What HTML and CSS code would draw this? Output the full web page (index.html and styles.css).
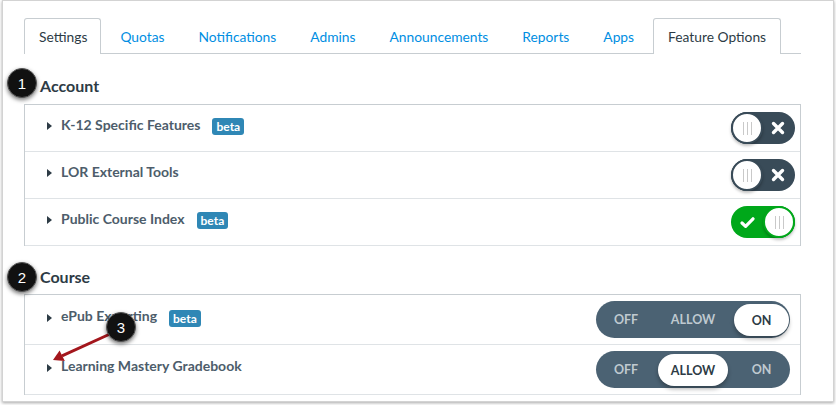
FILE: index.html
```html
<!DOCTYPE html>
<html>
<head>
<meta charset="utf-8">
<link rel="stylesheet" href="styles.css">
</head>
<body>
<div class="frame">
  <div class="tabs">
    <div class="tab active">Settings</div>
    <div class="tab">Quotas</div>
    <div class="tab">Notifications</div>
    <div class="tab">Admins</div>
    <div class="tab">Announcements</div>
    <div class="tab">Reports</div>
    <div class="tab">Apps</div>
    <div class="tab active">Feature Options</div>
  </div>

  <h2 class="section-title">Account</h2>
  <div class="panel">
    <div class="row">
      <span class="caret"></span><span class="name">K-12 Specific Features</span><span class="beta">beta</span>
      <span class="switch off">
        <span class="knob"><i></i><i></i><i></i></span>
        <svg class="mark" width="14" height="14" viewBox="0 0 14 14"><path d="M2.5 2.5 L11.5 11.5 M11.5 2.5 L2.5 11.5" stroke="#fff" stroke-width="3.4" stroke-linecap="round"/></svg>
      </span>
    </div>
    <div class="row">
      <span class="caret"></span><span class="name">LOR External Tools</span>
      <span class="switch off">
        <span class="knob"><i></i><i></i><i></i></span>
        <svg class="mark" width="14" height="14" viewBox="0 0 14 14"><path d="M2.5 2.5 L11.5 11.5 M11.5 2.5 L2.5 11.5" stroke="#fff" stroke-width="3.4" stroke-linecap="round"/></svg>
      </span>
    </div>
    <div class="row">
      <span class="caret"></span><span class="name">Public Course Index</span><span class="beta">beta</span>
      <span class="switch on">
        <svg class="mark" width="15" height="13" viewBox="0 0 15 13"><path d="M2 7 L5.6 10.4 L13 2.8" fill="none" stroke="#fff" stroke-width="3.2" stroke-linecap="round" stroke-linejoin="round"/></svg>
        <span class="knob"><i></i><i></i><i></i></span>
      </span>
    </div>
  </div>

  <h2 class="section-title course">Course</h2>
  <div class="panel">
    <div class="row tall">
      <span class="caret"></span><span class="name">ePub Exporting</span><span class="beta">beta</span>
      <span class="tri">
        <span class="opt o-off">OFF</span>
        <span class="opt o-allow">ALLOW</span>
        <span class="opt o-on sel">ON</span>
      </span>
    </div>
    <div class="row tall">
      <span class="caret"></span><span class="name">Learning Mastery Gradebook</span>
      <span class="tri">
        <span class="opt o-off">OFF</span>
        <span class="opt o-allow sel">ALLOW</span>
        <span class="opt o-on">ON</span>
      </span>
    </div>
  </div>
</div>

<span class="callout c1">1</span>
<span class="callout c2">2</span>
<svg class="arrow" width="836" height="405" viewBox="0 0 836 405">
  <line x1="110" y1="334" x2="62" y2="355.9" stroke="#a3161c" stroke-width="3"/>
  <polygon points="53,360 64.8,361 59.6,350.4" fill="#a3161c"/>
</svg>
<span class="callout c3">3</span>
</body>
</html>
```

FILE: styles.css
```css
html, body {
  margin: 0;
  padding: 0;
  background: #fff;
}
body {
  position: relative;
  width: 836px;
  height: 405px;
  overflow: hidden;
  font-family: Lato, "Noto Sans", "Liberation Sans", sans-serif;
}
.frame {
  margin-left: 2px;
  border: 1px solid #d3d3d3;
  box-shadow: 0 1px 3px rgba(0,0,0,0.35);
  padding: 17px 0 0 21px;
  box-sizing: border-box;
  width: 832px;
  height: 402px;
  background: #fff;
}
.tabs {
  display: flex;
  width: 777px;
  height: 35px;
  border-bottom: 1px solid #c7cdd1;
}
.tab {
  flex-shrink: 0;
  white-space: nowrap;
  height: 35px;
  box-sizing: border-box;
  padding: 0 14px;
  margin-right: 4px;
  display: flex;
  align-items: center;
  font-size: 13.8px;
  color: #008ee2;
  border: 1px solid transparent;
  border-bottom: none;
}
.tab:first-child {
  padding-right: 13px;
}
.tab.active {
  color: #2d3b45;
  border-color: #c7cdd1;
  border-radius: 3px 3px 0 0;
  background: #fff;
  height: 36px;
  margin-bottom: -1px;
}
.section-title {
  margin: 20px 0 6px;
  padding-left: 16px;
  font-size: 16px;
  line-height: 24px;
  font-weight: 700;
  color: #2d3b45;
}
.section-title.course {
  margin: 19px 0 5px;
}
.panel {
  width: 777px;
  box-sizing: border-box;
  border: 1px solid #c7cdd1;
  border-bottom: none;
}
.row {
  height: 47px;
  box-sizing: border-box;
  border-bottom: 1px solid #dfe3e6;
  display: flex;
  align-items: center;
  padding: 0 5px 0 22px;
}
.row.tall {
  height: 50px;
  padding-right: 10px;
}
.caret {
  width: 0;
  height: 0;
  border-top: 4px solid transparent;
  border-bottom: 4px solid transparent;
  border-left: 5px solid #2d3b45;
  margin-right: 9px;
  margin-bottom: 4px;
}
.name {
  font-size: 14px;
  font-weight: 700;
  color: #4d5d6b;
  margin-bottom: 8px;
}
.beta {
  margin-left: 12px;
  margin-bottom: 3px;
  height: 17px;
  padding: 0 4px;
  border-radius: 3px;
  background: #2f87b5;
  color: #fff;
  font-size: 12px;
  font-weight: 700;
  line-height: 17px;
}
.switch {
  margin-left: auto;
  width: 64px;
  height: 32px;
  border-radius: 16px;
  box-sizing: border-box;
  display: flex;
  align-items: center;
  justify-content: space-between;
}
.switch.off {
  background: #394b58;
  padding-right: 10px;
}
.switch.on {
  background: #00a81a;
  padding-left: 9px;
}
.knob {
  width: 32px;
  height: 32px;
  border-radius: 50%;
  background: #fff;
  box-sizing: border-box;
  border: 2px solid #394b58;
  box-shadow: 0 2px 3px rgba(0,0,0,0.25);
  display: flex;
  align-items: center;
  justify-content: center;
  gap: 3px;
}
.switch.on .knob {
  border-color: #00a81a;
}
.knob i {
  display: block;
  width: 1px;
  height: 13px;
  background: #c9c9c9;
}
.tri {
  margin-left: auto;
  width: 194px;
  height: 37px;
  border-radius: 19px;
  background: #4b6273;
  box-sizing: border-box;
  padding: 0 1px 0 2px;
  display: flex;
  align-items: center;
}
.opt {
  height: 32px;
  border-radius: 16px;
  display: flex;
  align-items: center;
  justify-content: center;
  font-size: 12.5px;
  font-weight: 700;
  color: #bfc9d0;
}
.o-off { width: 56px; }
.o-allow { width: 70px; margin-left: 4px; }
.o-on { width: 55px; margin-left: 6px; }
.opt.sel {
  background: #fff;
  color: #2d3b45;
  box-shadow: 0 3px 4px rgba(0,0,0,0.3);
  margin-top: 1px;
}
.callout {
  position: absolute;
  width: 30px;
  height: 30px;
  border-radius: 50%;
  background: #111;
  color: #fff;
  font-family: "Liberation Sans", Arial, sans-serif;
  font-size: 15px;
  display: flex;
  align-items: center;
  justify-content: center;
  box-shadow: 0 2px 4px rgba(0,0,0,0.55);
  border: 1px solid #555;
  box-sizing: border-box;
}
.c1 { left: 7px; top: 68px; }
.c2 { left: 7px; top: 262px; }
.c3 { left: 106px; top: 312px; }
.arrow {
  position: absolute;
  left: 0;
  top: 0;
}
```
